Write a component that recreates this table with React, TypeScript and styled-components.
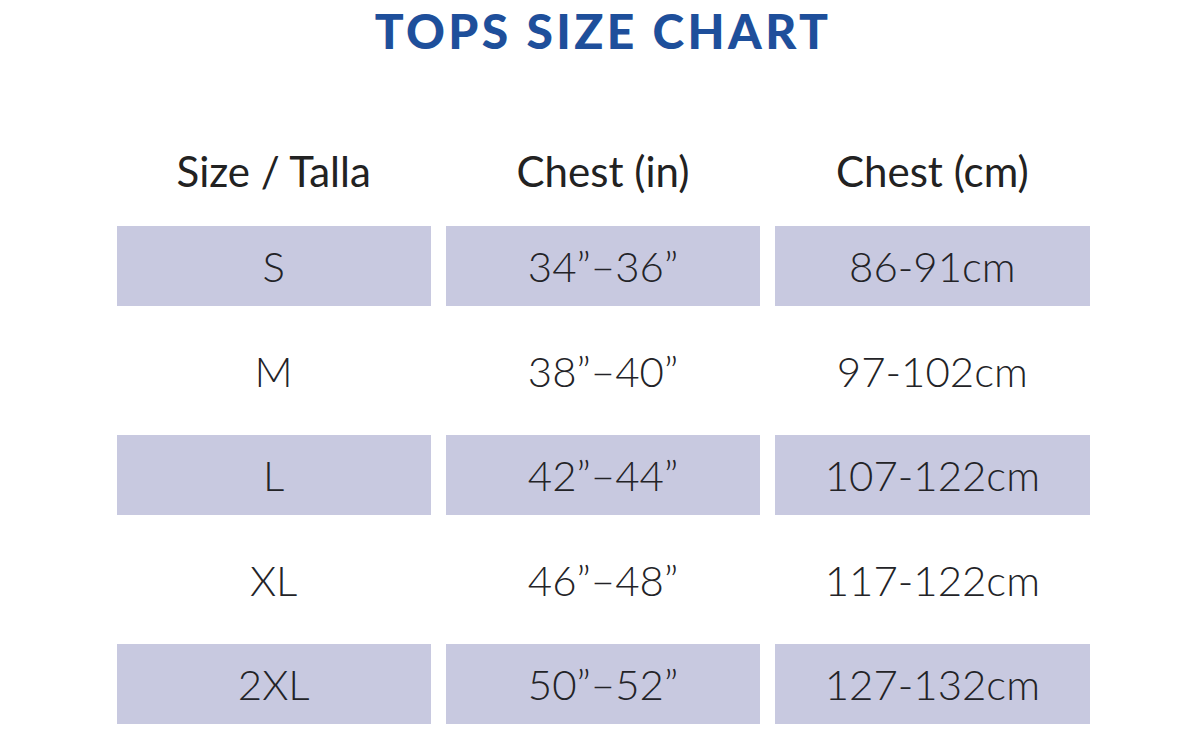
import React from "react";
import styled, { createGlobalStyle } from "styled-components";

const Global = createGlobalStyle`
  html, body { margin: 0; padding: 0; background: #ffffff; }
  body { font-family: Lato, "Noto Sans", sans-serif; }
`;

const Page = styled.div`
  width: 1200px;
  height: 744px;
  box-sizing: border-box;
  padding-top: 1px;
  padding-left: 6px;
  display: flex;
  flex-direction: column;
  align-items: center;
  overflow: hidden;
`;

const Title = styled.h1`
  margin: 0;
  font-family: Lato, sans-serif;
  font-weight: 900;
  font-size: 48px;
  line-height: 60px;
  color: #1e4f9b;
  letter-spacing: 3.4px;
`;

const Table = styled.div`
  margin-top: 82px;
  width: 973px;
  display: grid;
  grid-template-columns: repeat(3, 1fr);
  column-gap: 15px;
`;

const HeadCell = styled.div`
  height: 56px;
  display: flex;
  align-items: center;
  justify-content: center;
  font-size: 42px;
  color: #222;
  margin-bottom: 27px;
`;

const Cell = styled.div<{ $shaded: boolean }>`
  height: 80px;
  margin-bottom: 24.5px;
  display: flex;
  align-items: center;
  justify-content: center;
  font-size: 42px;
  font-weight: 300;
  color: #232327;
  background: ${(p) => (p.$shaded ? "#c8c9e0" : "transparent")};
`;

const rows = [
  ["S", "34”–36”", "86-91cm"],
  ["M", "38”–40”", "97-102cm"],
  ["L", "42”–44”", "107-122cm"],
  ["XL", "46”–48”", "117-122cm"],
  ["2XL", "50”–52”", "127-132cm"],
];

export default function App() {
  return (
    <>
      <Global />
      <Page>
        <Title>TOPS SIZE CHART</Title>
        <Table>
          <HeadCell>Size / Talla</HeadCell>
          <HeadCell>Chest (in)</HeadCell>
          <HeadCell>Chest (cm)</HeadCell>
          {rows.map((r, i) =>
            r.map((v, j) => (
              <Cell key={`${i}-${j}`} $shaded={i % 2 === 0}>
                {v}
              </Cell>
            ))
          )}
        </Table>
      </Page>
    </>
  );
}
